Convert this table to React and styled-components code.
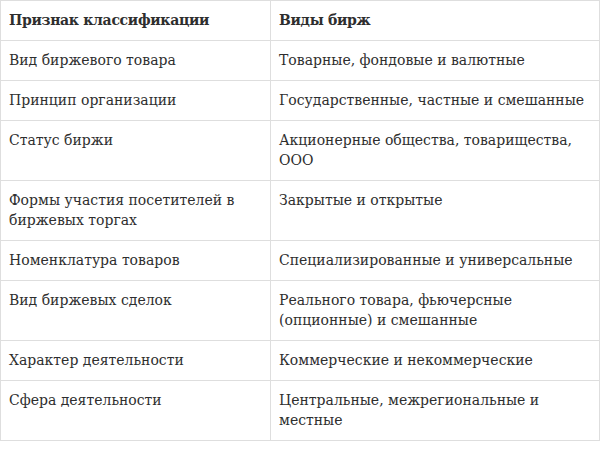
import React from "react";
import styled, { createGlobalStyle } from "styled-components";

const GlobalStyle = createGlobalStyle`
  html, body {
    margin: 0;
    padding: 0;
    background: #fff;
  }
`;

const rows = [
  ["Вид биржевого товара", "Товарные, фондовые и валютные"],
  ["Принцип организации", "Государственные, частные и смешанные"],
  ["Статус биржи", "Акционерные общества, товарищества, ООО"],
  ["Формы участия посетителей в биржевых торгах", "Закрытые и открытые"],
  ["Номенклатура товаров", "Специализированные и универсальные"],
  ["Вид биржевых сделок", "Реального товара, фьючерсные (опционные) и смешанные"],
  ["Характер деятельности", "Коммерческие и некоммерческие"],
  ["Сфера деятельности", "Центральные, межрегиональные и местные"],
];

const Table = styled.table`
  width: 600px;
  border-collapse: collapse;
  table-layout: fixed;
  font-family: "DejaVu Serif", "Liberation Serif", serif;
  font-size: 14px;
  line-height: 20px;
  color: #2e2e2e;
`;

const Cell = styled.td`
  border: 1px solid #dedede;
  padding: 9px 8px 10px 8px;
  vertical-align: top;
  font-weight: ${({ $head }) => ($head ? 700 : 400)};
  letter-spacing: ${({ $head }) => ($head ? "-0.3px" : "0")};
  width: ${({ $first }) => ($first ? "253px" : "auto")};
`;

function App() {
  return (
    <>
      <GlobalStyle />
      <Table>
        <tbody>
          <tr>
            <Cell $head $first>Признак классификации</Cell>
            <Cell $head>Виды бирж</Cell>
          </tr>
          {rows.map(([sign, kinds]) => (
            <tr key={sign}>
              <Cell $first>{sign}</Cell>
              <Cell>{kinds}</Cell>
            </tr>
          ))}
        </tbody>
      </Table>
    </>
  );
}

export default App;
